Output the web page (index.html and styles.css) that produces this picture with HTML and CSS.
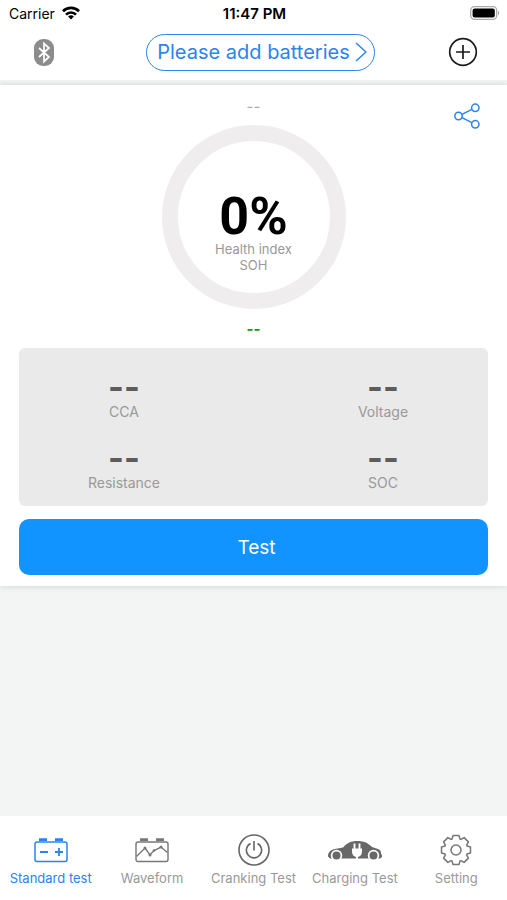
FILE: index.html
```html
<!DOCTYPE html>
<html lang="en">
<head>
    <meta charset="UTF-8">
    <meta name="viewport" content="width=device-width, initial-scale=1.0">
    <title>Battery Tester</title>

    <link rel="stylesheet" href="styles.css">
</head>
<body>

    <!-- Status bar -->
    <div class="status-bar">
        <div class="carrier">
            <span>Carrier</span>
            <svg width="18" height="14" viewBox="0 0 18 14" fill="none" stroke="#000" stroke-width="2.7">
                <path d="M1 5.2a11.3 11.3 0 0 1 16 0"/>
                <path d="M4 8.6a7 7 0 0 1 10 0"/>
                <path d="M9 13.6l-2.9-3a4.1 4.1 0 0 1 5.8 0z" fill="#000" stroke="none"/>
            </svg>
        </div>
        <div class="clock">11:47 PM</div>
        <div class="battery">
            <svg width="30" height="14" viewBox="0 0 30 14">
                <rect x="0.7" y="0.7" width="26" height="12.6" rx="3.8" fill="#fff" stroke="#aaa" stroke-width="1.3"/>
                <rect x="2.6" y="2.6" width="22.2" height="8.8" rx="2" fill="#000"/>
                <path d="M28 4.600q2.600 2.400 0 4.800z" fill="#aaa"/>
            </svg>
        </div>
    </div>

    <!-- Header -->
    <header class="header">
        <button class="icon-btn" aria-label="Bluetooth">
            <svg width="20" height="27" viewBox="0 0 20 27">
                <rect width="20" height="27" rx="9" fill="#8c8c8c"/>
                <path d="M5 9l10 9-5 4.5V4.5L15 9 5 18" fill="none" stroke="#fff" stroke-width="1.7"/>
            </svg>
        </button>
        <button class="add-battery">
            Please add batteries
            <svg width="12" height="20" viewBox="0 0 12 20" fill="none" stroke="#2b83ee" stroke-width="1.5">
                <path d="M1 1l10 9-10 9"/>
            </svg>
        </button>
        <button class="icon-btn" aria-label="Add">
            <svg width="30" height="30" viewBox="0 0 30 30" fill="none" stroke="#1c1c1c" stroke-width="1.7">
                <circle cx="15" cy="15" r="13.3"/>
                <path d="M15 8v14M8 15h14"/>
            </svg>
        </button>
    </header>

    <!-- Test result -->
    <main class="result">
        <button class="share-btn" aria-label="Share">
            <svg width="26" height="26" viewBox="0 0 26 26" fill="none" stroke="#2b83ee" stroke-width="1.5">
                <circle cx="4.5" cy="13" r="3.7"/>
                <circle cx="21.3" cy="4.8" r="3.7"/>
                <circle cx="21.3" cy="21.3" r="3.7"/>
                <path d="M7.9 11.4l10-5M7.9 14.6l10 5"/>
            </svg>
        </button>

        <div class="battery-name">--</div>
        <div class="gauge">
            <div class="gauge-value">0%</div>
            <div class="gauge-label">Health index<br>SOH</div>
        </div>
        <div class="battery-state">--</div>

        <div class="stats">
            <div class="stat">
                <div class="stat-value">--</div>
                <div class="stat-label">CCA</div>
            </div>
            <div class="stat">
                <div class="stat-value">--</div>
                <div class="stat-label">Voltage</div>
            </div>
            <div class="stat">
                <div class="stat-value">--</div>
                <div class="stat-label">Resistance</div>
            </div>
            <div class="stat">
                <div class="stat-value">--</div>
                <div class="stat-label">SOC</div>
            </div>
        </div>

        <button class="test-btn">Test</button>
    </main>

    <!-- Tab bar -->
    <nav class="tab-bar">
        <a class="tab active" href="#">
            <svg width="34" height="32" viewBox="0 0 34 32" fill="none" stroke="currentColor" stroke-width="1.5">
                <rect x="1" y="8" width="32" height="19.5" rx="2"/>
                <path d="M5 5.6h8M21 5.6h8" stroke-width="2.8"/>
                <path d="M6 18h8M21 18h8M25 14v8" stroke-width="1.8"/>
            </svg>
            <span>Standard test</span>
        </a>
        <a class="tab" href="#">
            <svg width="34" height="32" viewBox="0 0 34 32" fill="none" stroke="#777" stroke-width="1.4">
                <rect x="1" y="8" width="32" height="19.5" rx="2"/>
                <path d="M5 5.6h8M21 5.6h8" stroke-width="2.8"/>
                <path d="M1.5 22.5l8.5-8.5 5 7 4-4.5 7-3.5 6.5 5.500"/>
                <g fill="#777" stroke="none">
                    <circle cx="10" cy="14" r="1.5"/>
                    <circle cx="15" cy="21" r="1.5"/>
                    <circle cx="19" cy="16.5" r="1.3"/>
                    <circle cx="26" cy="13" r="1.5"/>
                </g>
            </svg>
            <span>Waveform</span>
        </a>
        <a class="tab" href="#">
            <svg width="32" height="32" viewBox="0 0 32 32" fill="none" stroke="#666" stroke-width="1.6">
                <circle cx="16" cy="16" r="15"/>
                <path d="M12.5 9.5a7.6 7.6 0 1 0 7 0M16 7v9.5"/>
            </svg>
            <span>Cranking Test</span>
        </a>
        <a class="tab" href="#">
            <svg width="56" height="32" viewBox="0 0 56 32">
                <path d="M1 22.5c0-4 2-6.5 7-7.5l8-1.500C20 9 24 7 30 7c7 0 11 2 15 6l6 2c3 1 3 3 3 5l1 1v2l-2 1.500H3z" fill="#686868"/>
                <circle cx="9.5" cy="21.5" r="5.7" fill="#fff"/>
                <circle cx="46.5" cy="21.5" r="5.7" fill="#fff"/>
                <circle cx="9.5" cy="21.5" r="4" fill="#686868"/>
                <circle cx="46.5" cy="21.5" r="4" fill="#686868"/>
                <path d="M25 14.5h10v3c0 3-1.5 5-4 5.500v2h-2v-2c-2.500-.5-4-2.500-4-5.500z" fill="#fff"/>
                <path d="M27.500 9.500v6M32.500 9.500v6" stroke="#fff" stroke-width="1.9"/>
            </svg>
            <span>Charging Test</span>
        </a>
        <a class="tab" href="#">
            <svg width="32" height="32" viewBox="0 0 32 32" fill="none" stroke="#777" stroke-width="1.5" stroke-linejoin="round">
                <path d="M12 5L13 1.5H19L20 5 20.95 5.4 24.1 3.6 28.4 7.9 26.6 11.05 27 12 30.5 13V19L27 20 26.6 20.95 28.4 24.1 24.1 28.4 20.95 26.6 20 27 19 30.5H13L12 27 11.05 26.6 7.9 28.4 3.6 24.1 5.4 20.95 5 20 1.5 19V13L5 12 5.4 11.05 3.6 7.9 7.9 3.6 11.05 5.4z"/>
                <circle cx="16" cy="16" r="5"/>
            </svg>
            <span>Setting</span>
        </a>
    </nav>

</body>
</html>
```

FILE: styles.css
```css
* {
    margin: 0;
    padding: 0;
    box-sizing: border-box;
}

body {
    display: flex;
    flex-direction: column;
    min-height: 100vh;
    background-color: #f3f5f5;
    font-family: Inter, "Liberation Sans", sans-serif;
    color: #000;
}

button {
    font-family: inherit;
    background: none;
    border: none;
    cursor: pointer;
}

svg {
    display: block;
}

/* Status bar */
.status-bar {
    display: grid;
    grid-template-columns: 1fr auto 1fr;
    align-items: center;
    height: 26px;
    padding: 0 7px 0 9px;
    background-color: #fff;
    font-size: 14px;
}

.carrier {
    display: flex;
    align-items: center;
    gap: 7px;
}

.clock {
    font-size: 15px;
    font-weight: 600;
}

.battery {
    justify-self: end;
}

/* Header */
.header {
    display: flex;
    align-items: center;
    justify-content: space-between;
    height: 54px;
    padding: 0 20px 2px;
    background-color: #fff;
}

.icon-btn {
    display: flex;
    align-items: center;
    justify-content: center;
    width: 48px;
    height: 48px;
}

.add-battery {
    display: flex;
    align-items: center;
    gap: 5px;
    height: 37px;
    margin-left: 14px;
    padding: 0 7px 0 10px;
    border: 1px solid #2b83ee;
    border-radius: 20px;
    color: #2b83ee;
    font-size: 20px;
}

/* Test result */
.result {
    position: relative;
    display: flex;
    flex-direction: column;
    align-items: center;
    margin-top: 5px;
    padding: 12px 19px 11px;
    background-color: #fff;
    box-shadow: 0 0 6px rgba(0, 0, 0, 0.15);
}

.share-btn {
    position: absolute;
    top: 18px;
    right: 27px;
}

.battery-name,
.battery-state {
    font-size: 15px;
    line-height: 20px;
    color: #aaa;
}

.battery-state {
    font-weight: 700;
    color: #1a9a1a;
}

.gauge {
    display: flex;
    flex-direction: column;
    align-items: center;
    width: 184px;
    height: 184px;
    margin: 8px 0 10px;
    padding-top: 52px;
    border: 16px solid #efedee;
    border-radius: 50%;
}

.gauge-value {
    font-family: Roboto, sans-serif;
    font-size: 52px;
    font-weight: 700;
    line-height: 48px;
}

.gauge-label {
    font-size: 13px;
    line-height: 16px;
    text-align: center;
    color: #999;
}

.stats {
    display: grid;
    grid-template-columns: 210px 210px;
    justify-content: space-between;
    row-gap: 21px;
    width: 100%;
    margin-top: 9px;
    padding: 24px 0 13px;
    border-radius: 6px;
    background-color: #eaeaea;
}

.stat {
    text-align: center;
}

.stat-value {
    font-size: 34px;
    font-weight: 700;
    line-height: 30px;
    color: #5c5c5c;
}

.stat-label {
    font-size: 14px;
    line-height: 20px;
    color: #999;
}

.test-btn {
    width: 100%;
    height: 56px;
    margin-top: 13px;
    padding-left: 6px;
    border-radius: 10px;
    background-color: #1194ff;
    color: #fff;
    font-size: 19px;
}

/* Tab bar */
.tab-bar {
    display: flex;
    height: 84px;
    margin-top: auto;
    padding-top: 18px;
    background-color: #fff;
}

.tab {
    display: flex;
    flex: 1;
    flex-direction: column;
    align-items: center;
    gap: 4px;
    color: #999;
    font-size: 13px;
    line-height: 16px;
    text-decoration: none;
    white-space: nowrap;
}

.tab.active {
    color: #2b83ee;
}
```
